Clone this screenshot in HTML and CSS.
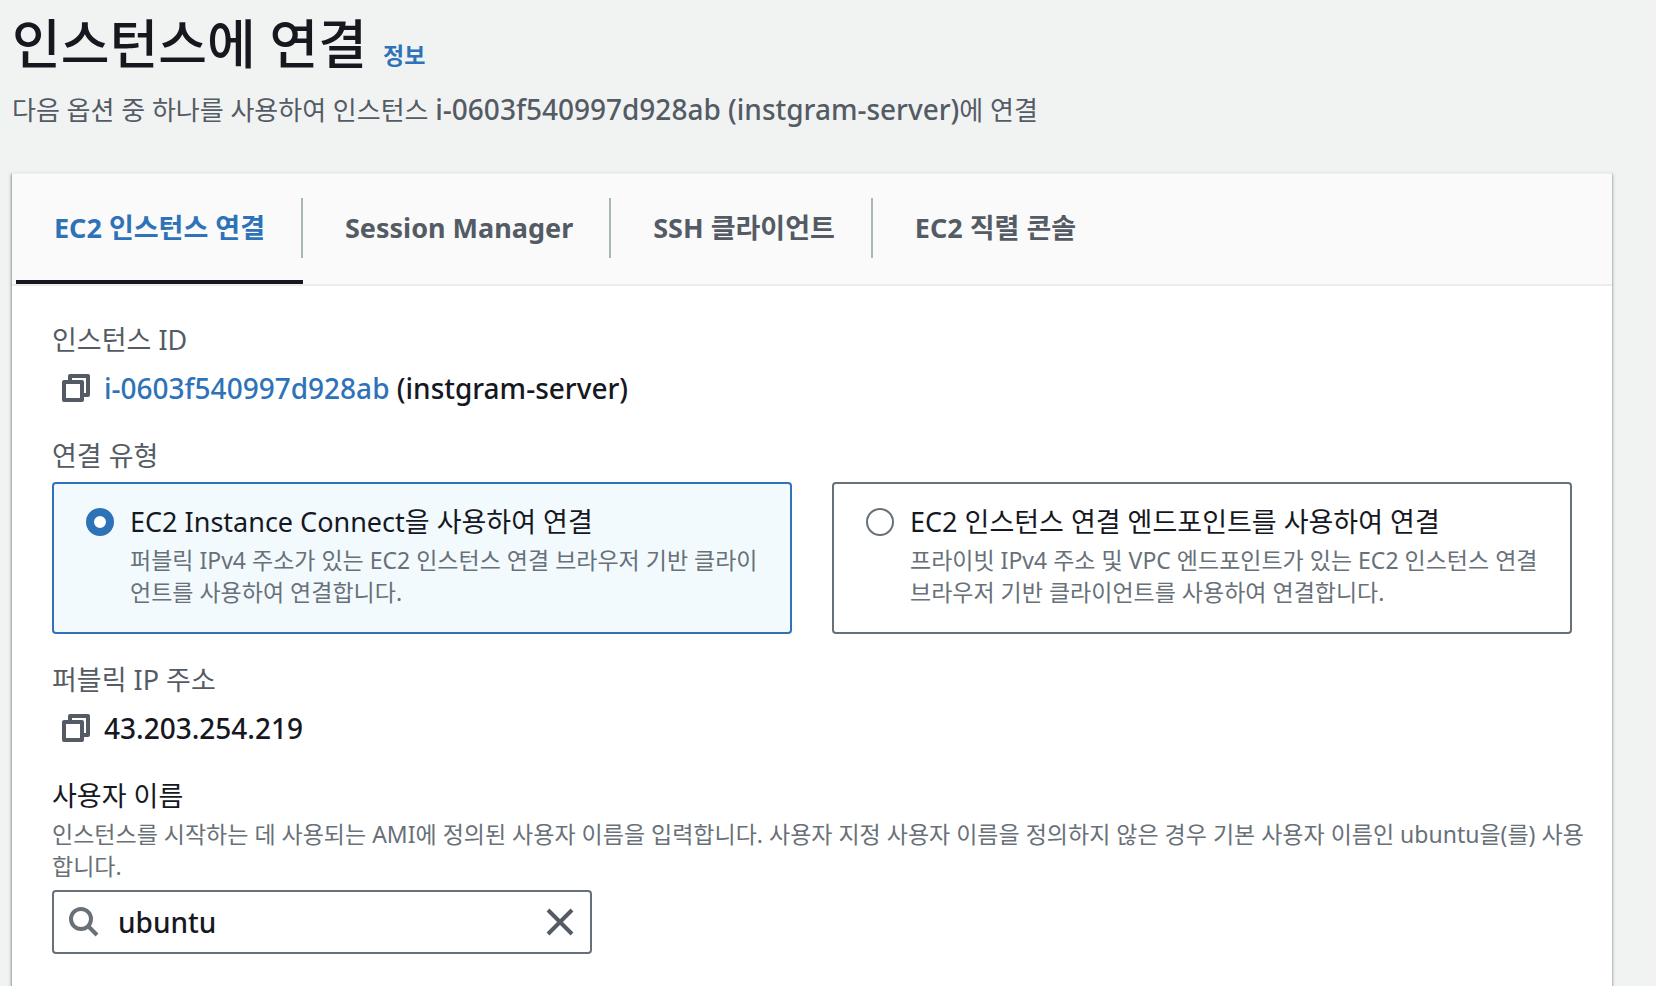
FILE: index.html
```html
<!DOCTYPE html>
<html lang="ko">
<head>
<meta charset="utf-8">
<meta name="viewport" content="width=device-width, initial-scale=1">
<title>인스턴스에 연결</title>
<link rel="stylesheet" href="styles.css">
</head>
<body>
<svg class="sprite" aria-hidden="true">
  <symbol id="copy" viewBox="0 0 32 32">
    <path d="M10 9V4h18v19h-5M4 10h18v18H4z" fill="none" stroke="currentColor" stroke-width="4" stroke-linejoin="round"/>
  </symbol>
</svg>
<main class="page">
  <header class="page-header">
    <div class="title-row">
      <h1 class="title">인스턴스에 연결</h1>
      <a class="info-link" href="#">정보</a>
    </div>
    <p class="subtitle">다음 옵션 중 하나를 사용하여 인스턴스 <span class="latin">i-0603f540997d928ab (instgram-server)</span>에 연결</p>
  </header>

  <section class="panel">
    <div class="tabs" role="tablist">
      <button class="tab tab-active" type="button" role="tab" aria-selected="true"><span class="tab-label">EC2 인스턴스 연결</span></button>
      <button class="tab" type="button" role="tab" aria-selected="false"><span class="tab-label">Session Manager</span></button>
      <button class="tab" type="button" role="tab" aria-selected="false"><span class="tab-label">SSH 클라이언트</span></button>
      <button class="tab" type="button" role="tab" aria-selected="false"><span class="tab-label">EC2 직렬 콘솔</span></button>
    </div>

    <div class="panel-body">
      <div class="field">
        <div class="label">인스턴스 ID</div>
        <div class="value">
          <button class="icon-button" type="button" aria-label="인스턴스 ID 복사"><svg class="icon"><use href="#copy"/></svg></button>
          <span class="latin"><a class="link" href="#">i-0603f540997d928ab</a> (instgram-server)</span>
        </div>
      </div>

      <fieldset class="field fieldset">
        <legend class="label">연결 유형</legend>
        <div class="tiles">
          <label class="tile">
            <input class="radio" type="radio" name="type" checked>
            <span class="tile-text">
              <span class="tile-title">EC2 Instance Connect을 사용하여 연결</span>
              <span class="hint">퍼블릭 IPv4 주소가 있는 EC2 인스턴스 연결 브라우저 기반 클라이언트를 사용하여 연결합니다.</span>
            </span>
          </label>
          <label class="tile">
            <input class="radio" type="radio" name="type">
            <span class="tile-text">
              <span class="tile-title">EC2 인스턴스 연결 엔드포인트를 사용하여 연결</span>
              <span class="hint">프라이빗 IPv4 주소 및 VPC 엔드포인트가 있는 EC2 인스턴스 연결 브라우저 기반 클라이언트를 사용하여 연결합니다.</span>
            </span>
          </label>
        </div>
      </fieldset>

      <div class="field">
        <div class="label">퍼블릭 IP 주소</div>
        <div class="value">
          <button class="icon-button" type="button" aria-label="퍼블릭 IP 주소 복사"><svg class="icon"><use href="#copy"/></svg></button>
          <span class="latin">43.203.254.219</span>
        </div>
      </div>

      <div class="field">
        <label class="label label-strong" for="username">사용자 이름</label>
        <p class="hint" id="username-hint">인스턴스를 시작하는 데 사용되는 AMI에 정의된 사용자 이름을 입력합니다. 사용자 지정 사용자 이름을 정의하지 않은 경우 기본 사용자 이름인 ubuntu을(를) 사용합니다.</p>
        <div class="search">
          <svg class="icon icon-search" viewBox="0 0 32 32" aria-hidden="true"><path d="M19.5 19.5 29 29" stroke="currentColor" stroke-width="4"/><circle cx="13" cy="13" r="10" fill="none" stroke="currentColor" stroke-width="4"/></svg>
          <input class="search-input" id="username" type="text" value="ubuntu" aria-describedby="username-hint">
          <button class="icon-button" type="button" aria-label="지우기"><svg class="icon" viewBox="0 0 32 32"><path d="M4 4l24 24M28 4 4 28" fill="none" stroke="currentColor" stroke-width="4"/></svg></button>
        </div>
      </div>
    </div>
  </section>
</main>
</body>
</html>
```
FILE: styles.css
```css
* {
  box-sizing: border-box;
}

body {
  margin: 0;
  background: #f1f3f3;
  color: #16181f;
  font-family: "Noto Sans", "Noto Sans CJK KR", sans-serif;
  font-size: 27px;
  line-height: 44px;
}

button,
input {
  font: inherit;
  color: inherit;
}

h1,
p {
  margin: 0;
}

a {
  color: #2e72b8;
  text-decoration: none;
}

.sprite {
  position: absolute;
  width: 0;
  height: 0;
}

.latin {
  font-size: 28px;
  font-weight: 500;
  line-height: 1;
}

.page {
  display: flex;
  flex-direction: column;
  min-height: 100vh;
  padding: 8px 44px 0 12px;
}

.page-header {
  display: flex;
  flex-direction: column;
  gap: 8px;
  margin-bottom: 40px;
}

.title-row {
  display: flex;
  align-items: baseline;
  gap: 16px;
}

.title {
  font-size: 53px;
  font-weight: 500;
  line-height: 72px;
}

.info-link {
  font-size: 23px;
  font-weight: 700;
  line-height: 32px;
}

.subtitle {
  color: #545b64;
  font-size: 26px;
}

.panel {
  flex: 1;
  background: #fff;
  border-top: 2px solid #ebeceb;
  box-shadow: 0 2px 2px rgba(0, 28, 36, 0.3), 1px 2px 3px rgba(0, 28, 36, 0.15), -1px 2px 3px rgba(0, 28, 36, 0.3);
}

.tabs {
  display: flex;
  height: 112px;
  padding-left: 4px;
  background: #fafafa;
  border-bottom: 2px solid #ebeceb;
}

.tab {
  display: flex;
  align-items: center;
  padding: 2px 0 0;
  border: 0;
  border-bottom: 4px solid transparent;
  background: none;
  color: #545b64;
  font-weight: 700;
  cursor: pointer;
}

.tab-label {
  padding: 8px 36px 8px 42px;
  border-right: 2px solid #aab7b8;
}

.tab:first-child .tab-label {
  padding-left: 38px;
}

.tab:last-child .tab-label {
  border-right: 0;
}

.tab-active {
  border-bottom-color: #16181f;
  color: #2e72b8;
}

.panel-body {
  display: flex;
  flex-direction: column;
  gap: 24px;
  padding: 32px 40px;
}

.label {
  display: block;
  padding: 0;
  color: #545b64;
}

.label-strong {
  color: #16181f;
}

.value {
  display: flex;
  align-items: center;
  gap: 12px;
  height: 44px;
  margin-top: 4px;
  padding-left: 8px;
}

.icon-button {
  display: flex;
  padding: 0;
  border: 0;
  background: none;
  color: #545b64;
  cursor: pointer;
}

.icon {
  width: 32px;
  height: 32px;
}

.fieldset {
  min-width: 0;
  margin: 0;
  padding: 0;
  border: 0;
}

.tiles {
  display: grid;
  grid-template-columns: 1fr 1fr;
  gap: 40px;
  margin-top: 4px;
}

.tile {
  display: flex;
  gap: 16px;
  padding: 16px 32px 24px;
  border: 2px solid #687078;
  border-radius: 4px;
}

.tile:has(:checked) {
  border-color: #2e72b8;
  background: #f2fafe;
}

.radio {
  flex: none;
  width: 28px;
  height: 28px;
  margin: 8px 0;
  appearance: none;
  border: 2px solid #687078;
  border-radius: 50%;
  background: #fff;
}

.radio:checked {
  border: 8px solid #2e72b8;
}

.tile-title {
  display: block;
}

.hint {
  display: block;
  margin-right: -12px;
  color: #687078;
  font-size: 23px;
  line-height: 32px;
}

.search {
  display: flex;
  align-items: center;
  gap: 18px;
  width: 540px;
  max-width: 100%;
  height: 64px;
  margin-top: 8px;
  padding: 0 14px;
  border: 2px solid #687078;
  border-radius: 4px;
}

.icon-search {
  flex: none;
  color: #687078;
}

.search-input {
  flex: 1;
  min-width: 0;
  padding: 0;
  border: 0;
  background: none;
  font-size: 28px;
  font-weight: 500;
}

.search-input:focus {
  outline: none;
}
```
